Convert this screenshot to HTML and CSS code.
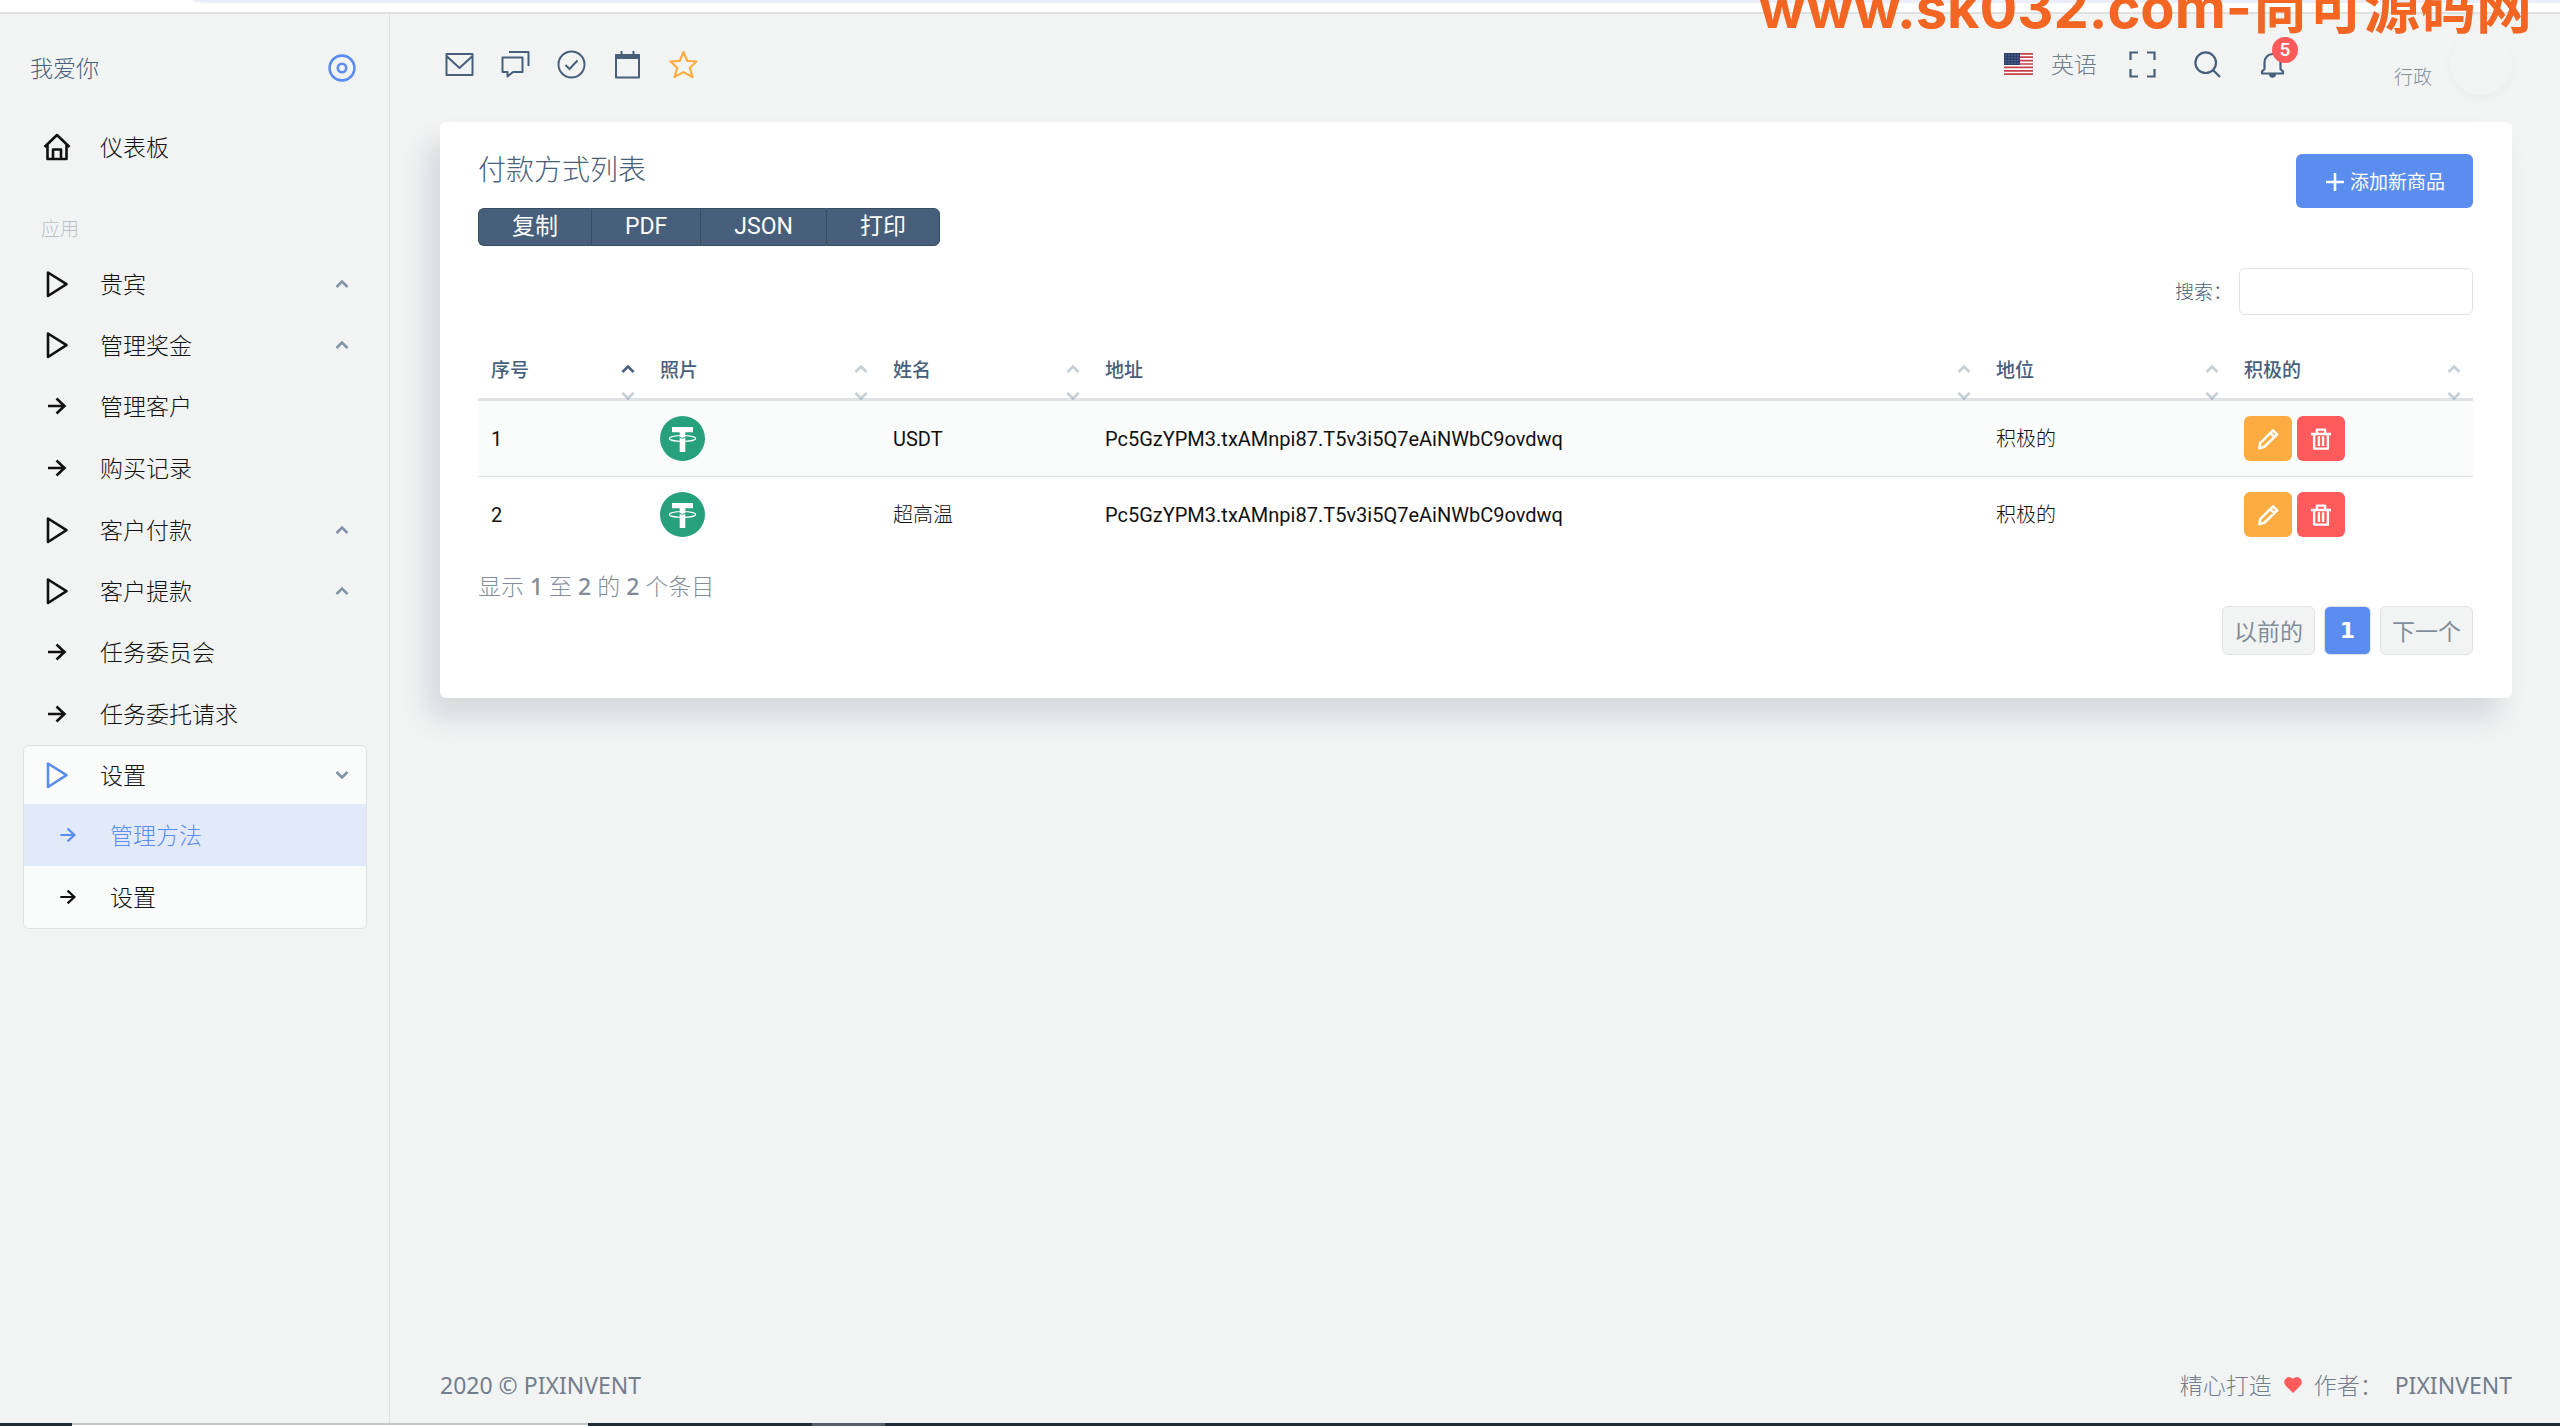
FILE: index.html
```html
<!DOCTYPE html>
<html lang="zh">
<head>
<meta charset="utf-8">
<title>付款方式列表</title>
<link rel="stylesheet" href="styles.css">
</head>
<body>
<svg class="sprite" aria-hidden="true">
  <symbol id="play" viewBox="0 0 28 28"><path d="M5 2.500V26L23.500 14.200Z" fill="none" stroke="currentColor" stroke-width="2.600" stroke-linejoin="round"/></symbol>
  <symbol id="arrow" viewBox="0 0 28 28"><path d="M5 14H21M13.500 6.500L21.500 14L13.500 21.500" fill="none" stroke="currentColor" stroke-width="2.600"/></symbol>
  <symbol id="up" viewBox="0 0 14 14"><path d="M1.500 10L7 4.500L12.500 10" fill="none" stroke="currentColor" stroke-width="2.600"/></symbol>
  <symbol id="down" viewBox="0 0 14 14"><path d="M1.500 4L7 9.500L12.500 4" fill="none" stroke="currentColor" stroke-width="2.600"/></symbol>
  <symbol id="usdt" viewBox="0 0 45 45"><circle cx="22.500" cy="22.500" r="22.500" fill="#26a17b"/><path d="M12 11H33V16.300H25.300V36H19.700V16.300H12Z" fill="#fff"/><ellipse cx="22.500" cy="22.400" rx="13.200" ry="2.900" fill="none" stroke="#fff" stroke-width="1.200"/><path d="M19.700 21.500Q22.500 23 25.300 21.500" fill="none" stroke="#26a17b"/></symbol>
  <symbol id="pencil" viewBox="0 0 24 24"><path d="M2.500 22L3.500 16.500L17.500 2.500L22 7L8 20.500ZM14.500 5.500L19 10" fill="none" stroke="currentColor" stroke-width="2.800" stroke-linejoin="round"/></symbol>
  <symbol id="trash" viewBox="0 0 24 24"><path d="M1 6.500H23M7.500 6V1.800H16.500V6M4.500 7V22.500H19.500V7M9.700 9V19.500M14.300 9V19.500" fill="none" stroke="currentColor" stroke-width="2.600" stroke-linejoin="round"/></symbol>
</svg>
<div class="browser-edge"><div class="address-bar"></div></div>
<div class="watermark">www.sk032.com-尚可源码网</div>

<div class="app">
  <aside class="sidebar">
    <div class="brand">
      <a href="#">我爱你</a>
      <button class="plain pin" aria-label="固定菜单"><svg viewBox="0 0 28 28"><g fill="none" stroke="currentColor" stroke-width="2.600"><circle cx="14" cy="14" r="12.400"/><circle cx="14" cy="14" r="4.200"/></g></svg></button>
    </div>
    <nav>
      <a class="item home" href="#"><svg class="ico" viewBox="0 0 28 28"><path d="M1.500 14L14 2L26.500 14M4.500 12V26H23.500V12M10 26V16.500H18V26" fill="none" stroke="currentColor" stroke-width="2.600" stroke-linejoin="round"/></svg><span>仪表板</span></a>
      <div class="section">应用</div>
      <a class="item group" href="#"><svg class="ico"><use href="#play"/></svg><span>贵宾</span><svg class="chev"><use href="#up"/></svg></a>
      <a class="item group" href="#"><svg class="ico"><use href="#play"/></svg><span>管理奖金</span><svg class="chev"><use href="#up"/></svg></a>
      <a class="item" href="#"><svg class="ico"><use href="#arrow"/></svg><span>管理客户</span></a>
      <a class="item" href="#"><svg class="ico"><use href="#arrow"/></svg><span>购买记录</span></a>
      <a class="item group" href="#"><svg class="ico"><use href="#play"/></svg><span>客户付款</span><svg class="chev"><use href="#up"/></svg></a>
      <a class="item group" href="#"><svg class="ico"><use href="#play"/></svg><span>客户提款</span><svg class="chev"><use href="#up"/></svg></a>
      <a class="item" href="#"><svg class="ico"><use href="#arrow"/></svg><span>任务委员会</span></a>
      <a class="item" href="#"><svg class="ico"><use href="#arrow"/></svg><span>任务委托请求</span></a>
      <div class="open">
        <a class="item head" href="#"><svg class="ico blue"><use href="#play"/></svg><span>设置</span><svg class="chev"><use href="#down"/></svg></a>
        <a class="item sub active" href="#"><svg class="ico small"><use href="#arrow"/></svg><span>管理方法</span></a>
        <a class="item sub" href="#"><svg class="ico small"><use href="#arrow"/></svg><span>设置</span></a>
      </div>
    </nav>
  </aside>

  <div class="main">
    <header class="topbar">
      <div class="shortcuts">
        <a href="#" aria-label="邮件"><svg viewBox="0 0 29 29"><path d="M1.500 4H27.500V25H1.500ZM1.500 6L14.500 18L27.500 6" fill="none" stroke="currentColor" stroke-width="2" stroke-linejoin="round"/></svg></a>
        <a href="#" aria-label="聊天"><svg viewBox="0 0 29 29"><path d="M1.500 7.500H21.500V22H12L6.500 26.500V22H1.500ZM8 2H27.500V16" fill="none" stroke="currentColor" stroke-width="2" stroke-linejoin="round"/></svg></a>
        <a href="#" aria-label="任务"><svg viewBox="0 0 29 29"><g fill="none" stroke="currentColor" stroke-width="2"><circle cx="14.500" cy="14.500" r="13"/><path d="M8.500 15L12.500 19L20.500 10.500"/></g></svg></a>
        <a href="#" aria-label="日历"><svg viewBox="0 0 29 29"><path d="M3 5H26V27.500H3ZM8.500 1V5M20.500 1V5" fill="none" stroke="currentColor" stroke-width="2" stroke-linejoin="round"/><path d="M2.500 4H26.500V9H2.500Z" fill="currentColor"/></svg></a>
        <a class="star" href="#" aria-label="收藏"><svg viewBox="0 0 29 29"><path d="M14.500 2L18.200 10.800L27.500 11.500L20.800 17.800L23.500 27L14.500 22.100L5.500 27L8.200 17.800L1.500 11.500L10.800 10.800Z" fill="none" stroke="currentColor" stroke-width="2.200" stroke-linejoin="round"/></svg></a>
      </div>
      <div class="tools">
        <button class="plain lang"><svg class="flag" viewBox="0 0 29 22"><path d="M0 0H29V22H0Z" fill="#fff"/><path d="M0 .8H29M0 4.200H29M0 7.600H29M0 11H29M0 14.400H29M0 17.800H29M0 21.200H29" stroke="#c8414b" stroke-width="1.700"/><path d="M0 0H16V12H0Z" fill="#2b3f6b"/><path d="M1.500 2H15M1.500 4.700H15M1.500 7.400H15M1.500 10H15" stroke="#8f9bb5" stroke-width="1" stroke-dasharray="1 2"/></svg><span>英语</span></button>
        <button class="plain" aria-label="全屏"><svg viewBox="0 0 27 27"><path d="M1.500 9V1.500H9M18 1.500H25.500V9M25.500 18V25.500H18M9 25.500H1.500V18" fill="none" stroke="currentColor" stroke-width="2.200"/></svg></button>
        <button class="plain" aria-label="搜索"><svg viewBox="0 0 27 27"><g fill="none" stroke="currentColor" stroke-width="2.200"><circle cx="11.700" cy="11.700" r="10.300"/><path d="M19 19L26 26"/></g></svg></button>
        <button class="plain bell" aria-label="通知"><svg viewBox="0 0 27 27"><path d="M3 22.500V20.500L5.500 18V11.500A8 8.500 0 0 1 21.500 11.500V18L24 20.500V22.500Z" fill="none" stroke="currentColor" stroke-width="2.200" stroke-linejoin="round"/><path d="M10 23H17A3.500 3.800 0 0 1 10 23Z" fill="currentColor"/></svg><span class="badge">5</span></button>
        <button class="plain user"><span>行政</span><span class="avatar"></span></button>
      </div>
    </header>

    <section class="card">
      <div class="card-head">
        <div class="heading">
          <h1>付款方式列表</h1>
          <div class="exports"><button>复制</button><button>PDF</button><button>JSON</button><button>打印</button></div>
        </div>
        <button class="add"><svg viewBox="0 0 18 18"><path d="M9 0V18M0 9H18" stroke="currentColor" stroke-width="2.600"/></svg>添加新商品</button>
      </div>
      <div class="search"><label for="q">搜索：</label><input id="q" type="search"></div>
      <table>
        <colgroup><col class="c-no"><col class="c-photo"><col class="c-name"><col><col class="c-status"><col class="c-act"></colgroup>
        <thead>
          <tr>
            <th class="sorted">序号<svg class="s-up"><use href="#up"/></svg><svg class="s-down"><use href="#down"/></svg></th>
            <th>照片<svg class="s-up"><use href="#up"/></svg><svg class="s-down"><use href="#down"/></svg></th>
            <th>姓名<svg class="s-up"><use href="#up"/></svg><svg class="s-down"><use href="#down"/></svg></th>
            <th>地址<svg class="s-up"><use href="#up"/></svg><svg class="s-down"><use href="#down"/></svg></th>
            <th>地位<svg class="s-up"><use href="#up"/></svg><svg class="s-down"><use href="#down"/></svg></th>
            <th>积极的<svg class="s-up"><use href="#up"/></svg><svg class="s-down"><use href="#down"/></svg></th>
          </tr>
        </thead>
        <tbody>
          <tr><td>1</td><td><svg class="coin"><use href="#usdt"/></svg></td><td>USDT</td><td>Pc5GzYPM3.txAMnpi87.T5v3i5Q7eAiNWbC9ovdwq</td><td class="zh">积极的</td>
            <td><div class="actions"><button class="edit" aria-label="编辑"><svg><use href="#pencil"/></svg></button><button class="del" aria-label="删除"><svg><use href="#trash"/></svg></button></div></td></tr>
          <tr><td>2</td><td><svg class="coin"><use href="#usdt"/></svg></td><td class="zh">超高温</td><td>Pc5GzYPM3.txAMnpi87.T5v3i5Q7eAiNWbC9ovdwq</td><td class="zh">积极的</td>
            <td><div class="actions"><button class="edit" aria-label="编辑"><svg><use href="#pencil"/></svg></button><button class="del" aria-label="删除"><svg><use href="#trash"/></svg></button></div></td></tr>
        </tbody>
      </table>
      <p class="info">显示 <b>1</b> 至 <b>2</b> 的 <b>2</b> 个条目</p>
      <div class="pager"><button>以前的</button><button class="current">1</button><button>下一个</button></div>
    </section>

    <footer>
      <span class="latin">2020 © PIXINVENT</span>
      <span class="made">精心打造 <svg viewBox="0 0 18 16"><path d="M9 16L1.500 8.500A4.800 4.800 0 0 1 9 1.800A4.800 4.800 0 0 1 16.500 8.500Z" fill="#ff5b5c"/></svg> 作者： <a class="latin" href="#">PIXINVENT</a></span>
    </footer>
  </div>
</div>
<div class="taskbar"><span class="window"></span><span class="task"></span></div>
</body>
</html>
```
FILE: styles.css
```css
* { box-sizing: border-box; }
body {
  margin: 0;
  min-height: 100vh;
  display: flex;
  flex-direction: column;
  background: #f2f4f4;
  color: #727e8c;
  font: 300 23px/30px "Noto Sans", "Noto Sans CJK SC", sans-serif;
}
a { color: inherit; text-decoration: none; }
button, input { font: inherit; color: inherit; }
svg { display: block; flex: none; }
.sprite { position: absolute; width: 0; height: 0; }
.plain { border: 0; padding: 0; background: none; display: flex; align-items: center; }
.latin { font-weight: 400; }

.browser-edge { height: 14px; background: #fff; border-bottom: 2px solid #dfe1e1; }
.address-bar { height: 3px; margin-left: 193px; background: #ebeef8; border-bottom-left-radius: 12px 3px; }
.watermark {
  position: absolute;
  top: -27px;
  right: 28px;
  z-index: 2;
  color: #f26522;
  font: 700 56px/70px Inter, "Noto Sans CJK SC", sans-serif;
  white-space: nowrap;
}

.app { flex: 1; display: flex; }
.sidebar { width: 390px; flex: none; border-right: 1px solid #dfe3e3; padding: 0 22px 0 23px; color: #111; }
.brand { display: flex; justify-content: space-between; align-items: center; height: 107px; padding: 0 11px 0 7px; color: #475f7b; }
.pin { color: #5a8dee; }
.pin svg { width: 28px; height: 28px; }
.item { display: flex; align-items: center; height: 62px; padding: 0 18px 0 20px; gap: 29px; }
.item.group { height: 61px; }
.item.home { margin-top: -5px; }
.ico { width: 28px; height: 28px; }
.chev { width: 14px; height: 14px; margin-left: auto; color: #8494a7; }
.section { height: 75px; padding: 36px 18px 0; color: #bac0c7; font-size: 19px; }
.open { border: 1px solid #dfe3e7; border-radius: 6px; background: #fafbfb; }
.item.head { height: 58px; padding: 0 17px 0 19px; }
.blue { color: #5a8dee; }
.item.sub { padding-left: 32px; gap: 30px; }
.small { width: 24px; height: 24px; }
.active { background: #e2eaf9; color: #5a8dee; }

.main { flex: 1; min-width: 0; display: flex; flex-direction: column; padding: 0 48px 0 50px; }
.topbar { display: flex; justify-content: space-between; height: 100px; margin-bottom: 8px; color: #475f7b; }
.shortcuts { display: flex; align-items: center; gap: 27px; padding-left: 5px; }
.shortcuts svg { width: 29px; height: 29px; }
.star { color: #fdac41; }
.tools { display: flex; align-items: center; gap: 38px; }
.tools svg { width: 27px; height: 27px; }
.lang { gap: 18px; color: #727e8c; margin-right: -6px; }
.tools .flag { width: 29px; height: 22px; }
.bell { position: relative; }
.badge {
  position: absolute;
  top: -14px;
  left: 13px;
  width: 26px;
  height: 26px;
  border-radius: 50%;
  background: #ff5b5c;
  color: #fff;
  font: 500 19px/26px Roboto, sans-serif;
  text-align: center;
}
.user { margin-left: 70px; gap: 18px; font-size: 19px; color: #828d99; }
.user > :first-child { padding-top: 26px; }
.avatar { width: 62px; height: 62px; border-radius: 50%; background: #f2f4f4; box-shadow: 0 3px 8px 0 rgba(25, 42, 70, .04); }

.card {
  background: #fff;
  border-radius: 6px;
  padding: 32px 39px 43px 38px;
  box-shadow: -13px 20px 29px 0 rgba(25, 42, 70, .13);
}
.card-head { display: flex; justify-content: space-between; align-items: flex-start; }
h1 { margin: 0 0 24px; font-size: 28px; line-height: 30px; font-weight: 300; color: #475f7b; }
.exports { display: flex; }
.exports button {
  height: 38px;
  padding: 0 33px;
  border: 1px solid #394c62;
  border-right-width: 0;
  background: #475f7b;
  color: #fff;
  font: 400 23px/30px Roboto, "Noto Sans CJK SC", sans-serif;
}
.exports button:first-child { border-radius: 6px 0 0 6px; }
.exports button:last-child { border-radius: 0 6px 6px 0; border-right-width: 1px; }
.add {
  display: flex;
  align-items: center;
  gap: 6px;
  height: 54px;
  padding: 2px 28px 0 30px;
  border: 0;
  border-radius: 6px;
  background: #5a8dee;
  color: #fff;
  font-size: 19px;
  font-weight: 400;
}
.add svg { width: 18px; height: 18px; }
.search { display: flex; justify-content: flex-end; align-items: center; gap: 7px; margin: 22px 0 25px; font-size: 19px; color: #475f7b; }
.search input { width: 234px; height: 47px; padding: 0 12px; border: 1px solid #dfe3e7; border-radius: 6px; background: #fff; }

table { width: 100%; table-layout: fixed; border-collapse: separate; border-spacing: 0; }
.c-no { width: 169px; }
.c-photo { width: 233px; }
.c-name { width: 212px; }
.c-status { width: 248px; }
.c-act { width: 242px; }
th {
  position: relative;
  height: 61px;
  padding: 1px 13px 0;
  border-bottom: 3px solid #dfe3e7;
  color: #475f7b;
  font-size: 19px;
  font-weight: 500;
  text-align: left;
}
th svg { position: absolute; right: 12px; width: 14px; height: 14px; opacity: .3; }
.s-up { top: 22px; }
.s-down { bottom: -5px; }
.sorted .s-up { opacity: 1; }
td { height: 75px; padding: 0 13px; color: #111; font: 400 20px/30px Roboto, "Noto Sans CJK SC", sans-serif; }
td.zh { font-weight: 300; }
tbody tr:first-child td { height: 76px; background: #fafbfb; border-bottom: 1px solid #dfe3e7; }
.coin { width: 45px; height: 45px; }
.actions { display: flex; gap: 5px; }
.actions button { width: 48px; height: 45px; border: 0; border-radius: 6px; padding: 0; color: #fff; display: flex; align-items: center; justify-content: center; }
.actions svg { width: 22px; height: 22px; }
.edit { background: #fdac41; }
.del { background: #ff5b5c; }

.info { margin: 17px 0 3px; line-height: 34px; color: #828d99; }
.info b { font-weight: 500; }
.pager { display: flex; justify-content: flex-end; gap: 9px; }
.pager button { height: 49px; padding: 0 11px; border: 1px solid #dfe3e7; border-radius: 6px; background: #f2f4f4; color: #828d99; font-weight: 400; }
.pager .current { width: 47px; padding: 0; background: #5a8dee; color: #fff; font: 700 22px/30px "DejaVu Sans", sans-serif; }

footer { display: flex; justify-content: space-between; align-items: center; height: 76px; margin-top: auto; }
.made { display: flex; align-items: center; gap: 12px; }
.made svg { width: 18px; height: 16px; }

.taskbar { display: flex; height: 3px; background: #202d38; }
.window { width: 516px; margin-left: 72px; background: #fff; border-top: 2px solid #c4c6c6; }
.task { width: 73px; margin-left: 224px; background: #565f68; }
```
